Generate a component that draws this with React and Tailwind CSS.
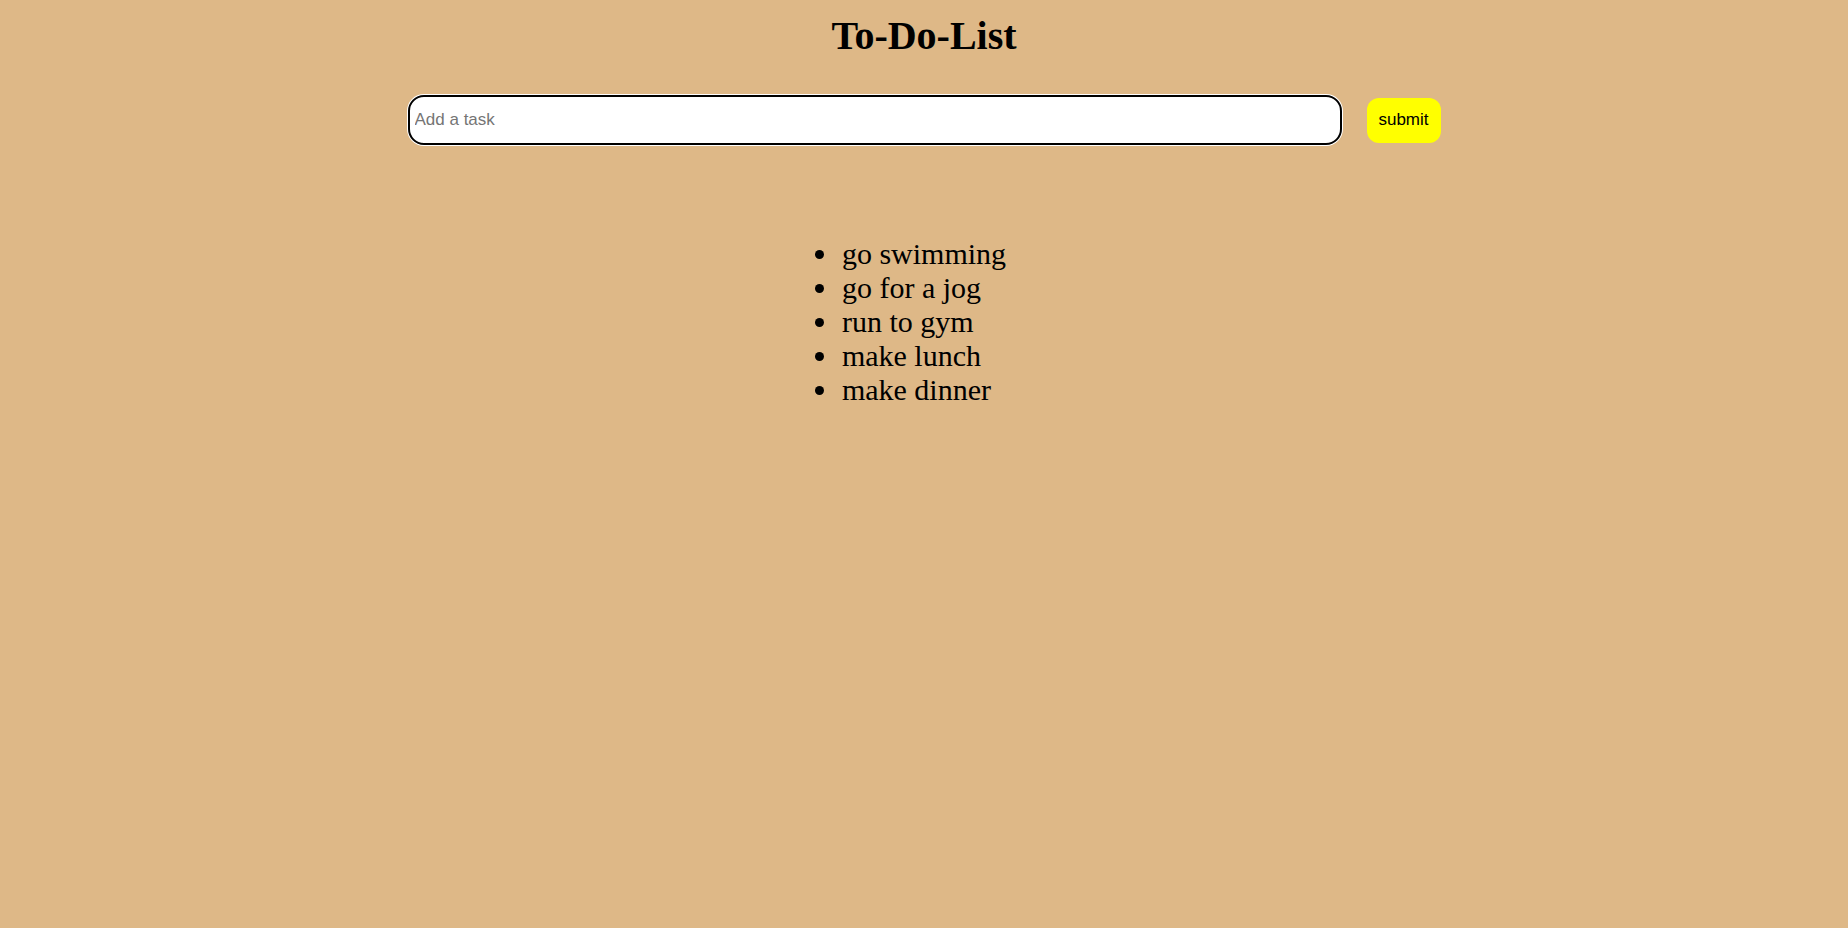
export default function App() {
  const items = ["go swimming", "go for a jog", "run to gym", "make lunch", "make dinner"];
  return (
    <div className="min-h-[928px] w-full bg-[#deb887] text-black" style={{ fontFamily: '"Liberation Serif", "Times New Roman", serif' }}>
      <h1 className="pt-[14px] text-center text-[40px] font-bold leading-[44px]">To-Do-List</h1>
      <div className="mt-[37px] flex items-center justify-center gap-[25px]">
        <input
          type="text"
          placeholder="Add a task"
          className="h-[50px] w-[934px] rounded-[16px] border-2 border-black bg-white px-[5px] text-[17px] text-black shadow-[0_0_0_1px_white] outline-none placeholder:text-[#757575]"
          style={{ fontFamily: '"Liberation Sans", Arial, sans-serif' }}
        />
        <button
          className="h-[45px] w-[74px] rounded-[12px] bg-[#ffff00] text-[17px] text-black"
          style={{ fontFamily: '"Liberation Sans", Arial, sans-serif' }}
        >
          submit
        </button>
      </div>
      <div className="mt-[92px] flex justify-center">
        <ul className="list-disc pl-[40px] pr-[42px] text-[30px] leading-[34px]">
          {items.map((t) => (
            <li key={t} className="pl-[2px]">{t}</li>
          ))}
        </ul>
      </div>
    </div>
  );
}
